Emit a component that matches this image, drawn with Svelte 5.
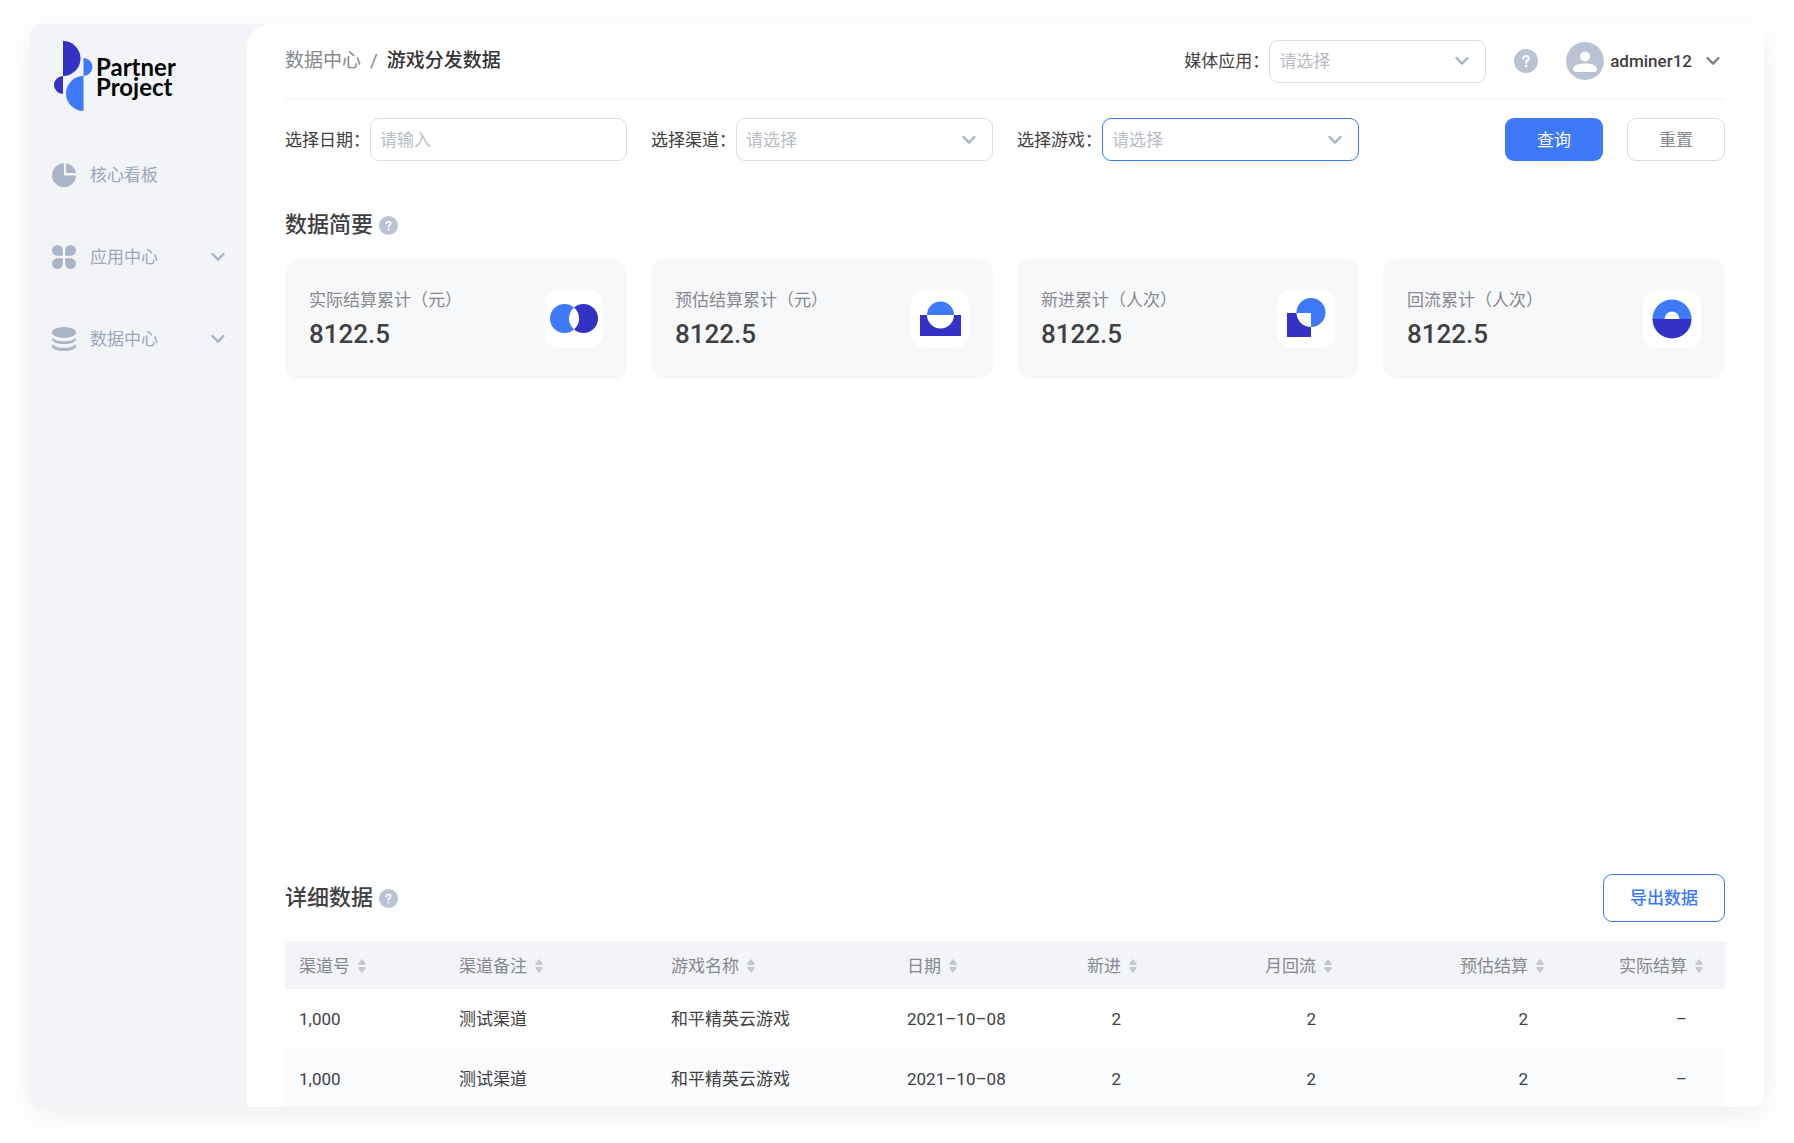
<script>
  const nav = [
    { icon: 'pie', label: '核心看板', expandable: false },
    { icon: 'apps', label: '应用中心', expandable: true },
    { icon: 'stack', label: '数据中心', expandable: true },
  ];

  const cards = [
    { icon: 'settled', label: '实际结算累计（元）', value: '8122.5' },
    { icon: 'estimated', label: '预估结算累计（元）', value: '8122.5' },
    { icon: 'fresh', label: '新进累计（人次）', value: '8122.5' },
    { icon: 'returned', label: '回流累计（人次）', value: '8122.5' },
  ];

  const columns = [
    { key: 'channel', label: '渠道号', weight: 160 },
    { key: 'note', label: '渠道备注', weight: 212 },
    { key: 'game', label: '游戏名称', weight: 236 },
    { key: 'date', label: '日期', weight: 147 },
    { key: 'fresh', label: '新进', weight: 119, numeric: true },
    { key: 'returned', label: '月回流', weight: 195, numeric: true },
    { key: 'estimated', label: '预估结算', weight: 212, numeric: true },
    { key: 'settled', label: '实际结算', weight: 159, numeric: true },
  ];
  const totalWeight = columns.reduce((sum, c) => sum + c.weight, 0);

  const record = {
    channel: '1,000',
    note: '测试渠道',
    game: '和平精英云游戏',
    date: '2021–10–08',
    fresh: '2',
    returned: '2',
    estimated: '2',
    settled: '–',
  };
  const rows = [record, { ...record }];
</script>

{#snippet chevron()}
  <svg class="chevron" viewBox="0 0 14 10" aria-hidden="true">
    <path d="M1.5 2 L7 7.6 L12.5 2" />
  </svg>
{/snippet}

{#snippet help()}
  <svg class="help" viewBox="0 0 24 24" aria-hidden="true">
    <circle cx="12" cy="12" r="12" />
    <path d="M9.2 9.6 C9.2 7.9 10.4 6.9 12 6.9 C13.7 6.9 14.8 7.9 14.8 9.3 C14.8 11.3 12.1 11.4 12.1 13.8" />
    <circle class="dot" cx="12.1" cy="17" r="1.3" />
  </svg>
{/snippet}

{#snippet dropdown(id, active)}
  <div class="select" class:active>
    <select {id}>
      <option value="">请选择</option>
    </select>
    {@render chevron()}
  </div>
{/snippet}

<div class="page">
  <div class="frame">
    <aside>
      <div class="logo">
        <svg viewBox="0 0 39 70" aria-hidden="true">
          <path fill="#3431c5" d="M9 0 A17.5 17.5 0 0 1 9 35 Z" />
          <path fill="#3431c5" d="M9 35 A9 9 0 0 0 9 53 Z" />
          <path fill="#3d79f9" d="M29.5 17 A9 9 0 0 1 29.5 35 Z" />
          <path fill="#3d79f9" d="M29.5 35 A17.5 17.5 0 0 0 29.5 70 Z" />
        </svg>
        <span>Partner<br />Project</span>
      </div>
      <nav>
        {#each nav as item}
          <a href="#{item.icon}">
            <svg class="nav-icon" viewBox="0 0 24 24" aria-hidden="true">
              {#if item.icon === 'pie'}
                <path d="M12 0.2 V12.4 H24 A12 12 0 1 1 12 0.2 Z" />
                <path d="M14.2 0.2 A12 12 0 0 1 24 10 H14.2 Z" />
              {:else if item.icon === 'apps'}
                <path d="M10.8 10.8 H5.4 A5.4 5.4 0 1 1 10.8 5.4 Z" />
                <path d="M13.2 10.8 V5.4 A5.4 5.4 0 1 1 18.6 10.8 Z" />
                <path d="M10.8 13.2 V18.6 A5.4 5.4 0 1 1 5.4 13.2 Z" />
                <path d="M13.2 13.2 H18.6 A5.4 5.4 0 1 1 13.2 18.6 Z" />
              {:else}
                <ellipse cx="12" cy="5.4" rx="12" ry="5.4" />
                <path d="M0 10.4 C3 13.8 8 14.3 12 14.3 C16 14.3 21 13.8 24 10.4 V12 C24 15 18.5 17 12 17 C5.5 17 0 15 0 12 Z" />
                <path d="M0 17 C3 20.3 8 20.8 12 20.8 C16 20.8 21 20.3 24 17 V19 C24 22 18.5 24 12 24 C5.5 24 0 22 0 19 Z" />
              {/if}
            </svg>
            <span>{item.label}</span>
            {#if item.expandable}{@render chevron()}{/if}
          </a>
        {/each}
      </nav>
    </aside>

    <main>
      <header>
        <div class="crumbs">
          <a href="#data">数据中心</a>
          <span>/</span>
          <strong>游戏分发数据</strong>
        </div>
        <div class="field media">
          <label for="media">媒体应用：</label>
          {@render dropdown('media', false)}
        </div>
        <button class="help-button" aria-label="帮助">{@render help()}</button>
        <button class="user">
          <svg class="avatar" viewBox="0 0 38 38" aria-hidden="true">
            <circle cx="19" cy="19" r="19" />
            <circle class="cut" cx="19" cy="14.5" r="5" />
            <path class="cut" d="M7 27.5 C7 23.5 12 21.5 19 21.5 C26 21.5 31 23.5 31 27.5 C31 29 30 30 28.5 30 H9.5 C8 30 7 29 7 27.5 Z" />
          </svg>
          <span>adminer12</span>
          {@render chevron()}
        </button>
      </header>

      <form class="grid filters" onsubmit={(e) => e.preventDefault()}>
        <div class="field">
          <label for="date">选择日期：</label>
          <input id="date" type="text" placeholder="请输入" />
        </div>
        <div class="field">
          <label for="channel">选择渠道：</label>
          {@render dropdown('channel', false)}
        </div>
        <div class="field">
          <label for="game">选择游戏：</label>
          {@render dropdown('game', true)}
        </div>
        <div class="actions">
          <button class="primary" type="submit">查询</button>
          <button class="plain" type="reset">重置</button>
        </div>
      </form>

      <section class="summary">
        <h2>数据简要{@render help()}</h2>
        <div class="grid">
          {#each cards as card}
            <article>
              <div>
                <p class="card-label">{card.label}</p>
                <p class="card-value">{card.value}</p>
              </div>
              <svg class="card-icon" viewBox="0 0 58 58" aria-hidden="true">
                {#if card.icon === 'settled'}
                  <circle class="light" cx="19.5" cy="28.5" r="14.5" />
                  <circle class="dark" cx="38.5" cy="28.5" r="14.5" />
                  <path class="cut" d="M29 17.5 A14.5 14.5 0 0 1 29 39.5 A14.5 14.5 0 0 1 29 17.5 Z" />
                {:else if card.icon === 'estimated'}
                  <rect class="dark" x="9" y="25" width="41" height="21" />
                  <path class="light" d="M16 25 A13.5 13.5 0 0 1 43 25 Z" />
                  <path class="cut" d="M16 25 A13.5 13.5 0 0 0 43 25 Z" />
                {:else if card.icon === 'fresh'}
                  <circle class="light" cx="34" cy="22.5" r="14.5" />
                  <rect class="dark" x="10" y="23" width="24" height="24" />
                  <path class="cut" d="M34 23 V37 A14.5 14.5 0 0 1 19.5 23 Z" />
                {:else}
                  <path class="light" d="M9.5 29 A19.5 19.5 0 0 1 48.5 29 Z" />
                  <path class="dark" d="M9.5 29 A19.5 19.5 0 0 0 48.5 29 Z" />
                  <path class="cut" d="M21.5 29 A7.5 7.5 0 0 1 36.5 29 Z" />
                {/if}
              </svg>
            </article>
          {/each}
        </div>
      </section>

      <section class="chart" aria-label="趋势图"></section>

      <section>
        <div class="detail-head">
          <h2>详细数据{@render help()}</h2>
          <button class="export">导出数据</button>
        </div>
        <table>
          <colgroup>
            {#each columns as col}
              <col style="width: {(col.weight / totalWeight) * 100}%" />
            {/each}
          </colgroup>
          <thead>
            <tr>
              {#each columns as col}
                <th class:numeric={col.numeric} scope="col">
                  <button class="sort">
                    {col.label}
                    <svg viewBox="0 0 8 16" aria-hidden="true">
                      <path d="M4 0.8 L7.6 5.6 Q8 7 7 7 H1 Q0 7 0.4 5.6 Z" />
                      <path d="M4 15.2 L7.6 10.4 Q8 9 7 9 H1 Q0 9 0.4 10.4 Z" />
                    </svg>
                  </button>
                </th>
              {/each}
            </tr>
          </thead>
          <tbody>
            {#each rows as row}
              <tr>
                {#each columns as col}
                  <td class:numeric={col.numeric}>{row[col.key]}</td>
                {/each}
              </tr>
            {/each}
          </tbody>
        </table>
      </section>
    </main>
  </div>
</div>

<style>
  :global(body) {
    background: #fff;
  }

  .page {
    box-sizing: border-box;
    height: 100vh;
    padding: 24px 30px 36px;
    overflow: hidden;
    color: #3f4042;
    font-family: Roboto, 'Noto Sans CJK SC', sans-serif;
    font-size: 17px;
    line-height: 24px;
  }

  .page :is(h2, p) {
    margin: 0;
  }

  .page :is(button, input, select) {
    box-sizing: border-box;
    margin: 0;
    font: inherit;
    color: inherit;
  }

  button {
    padding: 0;
    border: 0;
    background: none;
    cursor: pointer;
  }

  a {
    color: inherit;
    text-decoration: none;
  }

  svg {
    display: block;
    flex: none;
  }

  .frame {
    display: flex;
    height: 100%;
    overflow: hidden;
    border-radius: 12px;
    background: #f2f4f8;
    box-shadow: 0 8px 32px rgba(0, 0, 0, 0.07);
  }

  aside {
    flex: none;
    width: 217px;
  }

  .logo {
    display: flex;
    gap: 3px;
    padding: 17px 24px 0;
    color: #050505;
    font: 700 24px/20px Lato, sans-serif;
  }

  .logo svg {
    width: 39px;
    height: 70px;
  }

  .logo span {
    padding-top: 16px;
  }

  nav {
    display: grid;
    gap: 34px;
    padding: 40px 22px 0;
  }

  nav a {
    display: flex;
    align-items: center;
    height: 48px;
    color: #9ca7ba;
  }

  nav span {
    flex: 1;
    margin-left: 14px;
  }

  .nav-icon {
    width: 24px;
    height: 24px;
    fill: #a9b4c7;
  }

  .chevron {
    width: 14px;
    height: 10px;
    fill: none;
    stroke: #a9b4c7;
    stroke-width: 2.4;
    stroke-linecap: round;
    stroke-linejoin: round;
  }

  main {
    flex: 1;
    min-width: 0;
    padding: 0 39px 0 38px;
    border-radius: 24px 0 0 0;
    background: #fff;
  }

  header {
    display: flex;
    align-items: center;
    height: 74px;
    border-bottom: 2px solid #f5f6f8;
  }

  .crumbs {
    display: flex;
    gap: 9px;
    margin-right: auto;
    color: #86888d;
    font-size: 19px;
  }

  strong {
    color: #333436;
    font-weight: 500;
  }

  .field {
    display: flex;
    align-items: center;
    min-width: 0;
  }

  label {
    flex: none;
  }

  .media .select {
    width: 217px;
    flex: none;
  }

  .select {
    display: grid;
    flex: 1;
    align-items: center;
    min-width: 0;
  }

  .select > :global(*) {
    grid-area: 1 / 1;
  }

  .select .chevron {
    justify-self: end;
    margin-right: 17px;
    pointer-events: none;
  }

  input,
  select {
    width: 100%;
    min-width: 0;
    height: 43px;
    padding: 0 9px;
    border: 1px solid #d9dce8;
    border-radius: 9px;
    background: #fff;
    appearance: none;
    outline: none;
  }

  .page select,
  input::placeholder {
    color: #b9bdc6;
    opacity: 1;
  }

  .active select {
    border-color: #3d79f9;
  }

  .help {
    width: 24px;
    height: 24px;
    fill: #bac3d3;
  }

  .help path {
    fill: none;
    stroke: #fff;
    stroke-width: 2;
    stroke-linecap: round;
  }

  .help .dot,
  .cut {
    fill: #fff;
  }

  .page .help-button {
    margin: 0 28px;
  }

  .user {
    display: flex;
    align-items: center;
    gap: 6px;
    padding-right: 5px;
  }

  .user span {
    font-weight: 500;
  }

  .user .chevron {
    margin-left: 8px;
    stroke: #7d828c;
  }

  .avatar {
    width: 38px;
    height: 38px;
    fill: #bac3d3;
  }

  .grid {
    display: grid;
    grid-template-columns: repeat(4, minmax(0, 1fr));
    gap: 24px;
  }

  .filters {
    padding-top: 18px;
  }

  .actions {
    display: flex;
    justify-content: flex-end;
    gap: 24px;
  }

  .actions button {
    width: 98px;
    height: 43px;
    border-radius: 9px;
  }

  .page .primary {
    background: #3d79f9;
    color: #fff;
  }

  .page .plain {
    border: 1px solid #d9dce8;
    color: #86888d;
  }

  h2 {
    display: flex;
    align-items: center;
    gap: 6px;
    font-size: 22px;
    line-height: 30px;
    font-weight: 500;
  }

  h2 .help {
    width: 19px;
    height: 19px;
  }

  .summary {
    padding-top: 49px;
  }

  .summary h2 {
    margin-bottom: 19px;
  }

  article {
    display: flex;
    align-items: center;
    justify-content: space-between;
    box-sizing: border-box;
    height: 120px;
    padding: 0 24px;
    border-radius: 14px;
    background: #f7f8fa;
  }

  .card-label {
    color: #86888d;
  }

  .page .card-value {
    margin-top: 6px;
    font-size: 26px;
    line-height: 32px;
    font-weight: 500;
  }

  .card-icon {
    width: 58px;
    height: 58px;
    border-radius: 14px;
    background: #fff;
  }

  .light {
    fill: #3d79f9;
  }

  .dark {
    fill: #3431c5;
  }

  .chart {
    height: 495px;
  }

  .detail-head {
    display: flex;
    align-items: center;
    justify-content: space-between;
    margin-bottom: 19px;
  }

  .page .export {
    width: 122px;
    height: 48px;
    border: 1px solid #3d79f9;
    border-radius: 9px;
    color: #3d79f9;
    font-weight: 500;
  }

  table {
    width: 100%;
    border-collapse: collapse;
    table-layout: fixed;
  }

  th,
  td {
    padding: 0 14px;
    text-align: left;
    white-space: nowrap;
    font-weight: 400;
  }

  th {
    height: 48px;
    background: #f2f4f8;
    color: #86888d;
  }

  td {
    height: 60px;
  }

  .numeric {
    text-align: right;
  }

  th.numeric {
    padding-right: 22px;
  }

  td.numeric {
    padding-right: 38px;
  }

  tbody tr:nth-child(even) {
    background: #fafbfd;
  }

  .sort {
    display: inline-flex;
    align-items: center;
    gap: 8px;
    vertical-align: middle;
  }

  .sort svg {
    width: 8px;
    height: 16px;
    fill: #c5c9ce;
  }
</style>
